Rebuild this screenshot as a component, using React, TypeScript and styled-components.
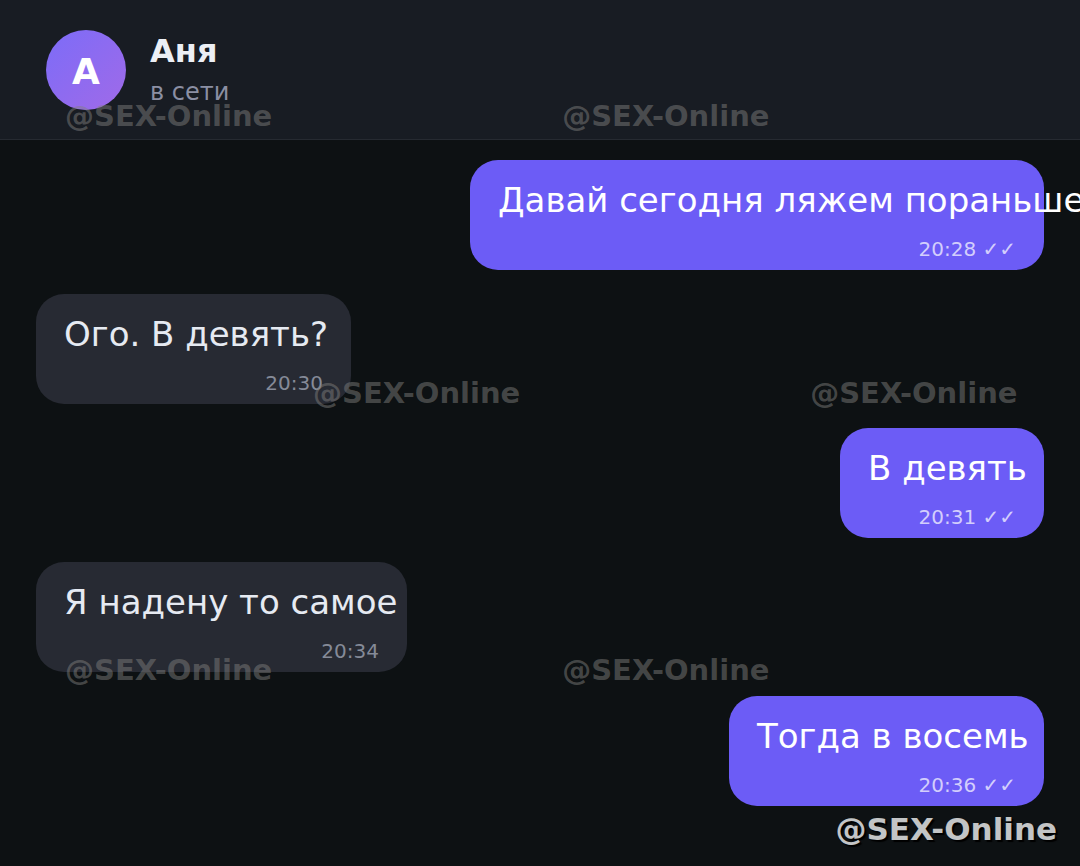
import React from "react";
import styled, { createGlobalStyle } from "styled-components";

const GlobalStyle = createGlobalStyle`
  * { box-sizing: border-box; }
  body {
    margin: 0;
    background: #0d1113;
    font-family: "DejaVu Sans", sans-serif;
  }
`;

const Page = styled.div`
  position: relative;
  min-height: 100vh;
  overflow: hidden;
  background: #0d1113;
`;

const Header = styled.header`
  display: flex;
  align-items: center;
  gap: 24px;
  height: 140px;
  padding: 0 46px;
  background: #181c23;
  border-bottom: 1px solid #262a31;
`;

const Avatar = styled.div`
  display: flex;
  align-items: center;
  justify-content: center;
  width: 80px;
  height: 80px;
  padding-top: 4px;
  border-radius: 50%;
  background: linear-gradient(135deg, #7c6cf8, #a06ae8);
  color: #ffffff;
  font-size: 36px;
  font-weight: 700;
  line-height: 40px;
`;

const Contact = styled.div`
  display: flex;
  flex-direction: column;
  padding-top: 4px;
`;

const Name = styled.h1`
  margin: 0;
  color: #eceff5;
  font-size: 32px;
  font-weight: 700;
  line-height: 40px;
`;

const Status = styled.p`
  margin: 0;
  color: #8b8fa3;
  font-size: 24px;
  line-height: 42px;
`;

const Messages = styled.ul`
  display: flex;
  flex-direction: column;
  gap: 24px;
  margin: 0;
  padding: 20px 36px 60px;
  list-style: none;
`;

const Bubble = styled.li<{ $outgoing: boolean }>`
  display: flex;
  flex-direction: column;
  justify-content: space-between;
  align-self: ${(p) => (p.$outgoing ? "flex-end" : "flex-start")};
  height: 110px;
  padding: 20px 28px 8px;
  border-radius: 28px;
  background: ${(p) => (p.$outgoing ? "#6c5cf6" : "#272a33")};
  color: ${(p) => (p.$outgoing ? "#ffffff" : "#e6eaf2")};
`;

const Text = styled.p`
  margin: 0;
  font-size: 34px;
  line-height: 40px;
  white-space: nowrap;
`;

const Meta = styled.div<{ $outgoing: boolean }>`
  color: ${(p) => (p.$outgoing ? "#d3cefc" : "#858a98")};
  font-size: 20px;
  line-height: 26px;
  text-align: right;
`;

const Overlay = styled.div`
  position: absolute;
  inset: 0;
  overflow: hidden;
  pointer-events: none;
`;

const MarkRow = styled.div<{ $shifted: boolean }>`
  display: flex;
  gap: 290px;
  height: 277px;
  padding: 100px 0 0 ${(p) => (p.$shifted ? 313 : 65)}px;
`;

const Mark = styled.span`
  color: rgba(130, 129, 127, 0.48);
  font-size: 29px;
  font-weight: 700;
  line-height: 32px;
  white-space: nowrap;
`;

const Signature = styled.div`
  position: absolute;
  right: 23px;
  bottom: 19px;
  color: #c3c5c6;
  font-size: 31px;
  font-weight: 700;
  line-height: 36px;
  text-shadow: 2px 2px 1px #000000;
`;

const HANDLE = "@SEX-Online";
const CHAR_WIDTH = 18.5;
const SIDE_PADDING = 56;

const messages = [
  { text: "Давай сегодня ляжем пораньше", time: "20:28", outgoing: true },
  { text: "Ого. В девять?", time: "20:30", outgoing: false },
  { text: "В девять", time: "20:31", outgoing: true },
  { text: "Я надену то самое", time: "20:34", outgoing: false },
  { text: "Тогда в восемь", time: "20:36", outgoing: true },
];

export default function App() {
  return (
    <Page>
      <GlobalStyle />
      <Header>
        <Avatar>А</Avatar>
        <Contact>
          <Name>Аня</Name>
          <Status>в сети</Status>
        </Contact>
      </Header>
      <Messages>
        {messages.map((m) => (
          <Bubble
            key={m.time}
            $outgoing={m.outgoing}
            style={{ width: Math.round(m.text.length * CHAR_WIDTH) + SIDE_PADDING }}
          >
            <Text>{m.text}</Text>
            <Meta $outgoing={m.outgoing}>
              <time>{m.time}</time>
              {m.outgoing && " ✓✓"}
            </Meta>
          </Bubble>
        ))}
      </Messages>
      <Overlay aria-hidden="true">
        {[false, true, false].map((shifted, i) => (
          <MarkRow key={i} $shifted={shifted}>
            <Mark>{HANDLE}</Mark>
            <Mark>{HANDLE}</Mark>
          </MarkRow>
        ))}
      </Overlay>
      <Signature>{HANDLE}</Signature>
    </Page>
  );
}
